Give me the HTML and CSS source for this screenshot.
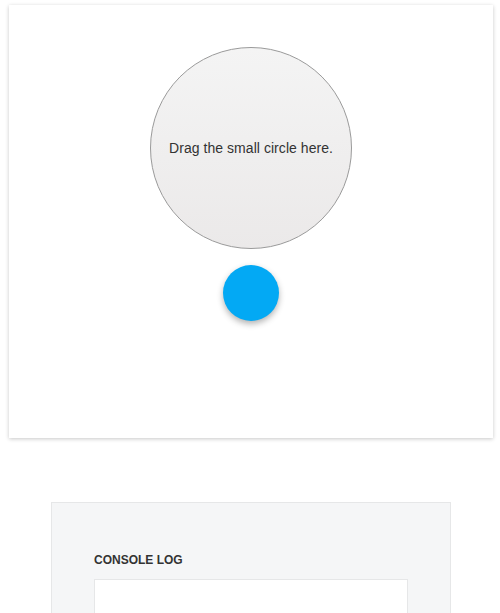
FILE: index.html
```html
<!DOCTYPE html>
<html>
<head>
<meta charset="utf-8">
<link rel="stylesheet" href="styles.css">
</head>
<body>
<div class="card">
  <div class="drop-zone"><span>Drag the small circle here.</span></div>
  <div class="dot"></div>
</div>
<div class="console">
  <div class="console-title">CONSOLE LOG</div>
  <div class="console-box"></div>
</div>
</body>
</html>
```
FILE: styles.css
```css
html, body {
  margin: 0;
  padding: 0;
  background: #fff;
  font-family: "Liberation Sans", Arial, sans-serif;
  overflow: hidden;
}
body {
  padding: 5px 7px 0 9px;
  height: 613px;
  box-sizing: border-box;
}
.card {
  height: 433px;
  background: #fff;
  box-shadow: 0 1px 4px rgba(0, 0, 0, 0.22);
  display: flex;
  flex-direction: column;
  align-items: center;
  padding-top: 42px;
  box-sizing: border-box;
}
.drop-zone {
  width: 200px;
  height: 200px;
  border: 1px solid #9a9a9a;
  border-radius: 50%;
  background: linear-gradient(#f4f4f4, #ebe9e9);
  display: flex;
  align-items: center;
  justify-content: center;
  font-size: 14px;
  letter-spacing: 0.05px;
  color: #333;
}
.dot {
  margin-top: 16px;
  width: 56px;
  height: 56px;
  border-radius: 50%;
  background: #03a9f4;
  box-shadow: 0 3px 6px rgba(0, 0, 0, 0.3);
}
.console {
  margin: 64px 0 0 42px;
  width: 400px;
  box-sizing: border-box;
  background: #f5f6f7;
  border: 1px solid #e6e7e8;
  border-bottom: 0;
  padding: 49px 42px 0;
  height: 111px;
  overflow: hidden;
}
.console-title {
  font-size: 12px;
  line-height: 16px;
  font-weight: bold;
  letter-spacing: 0;
  color: #333;
  margin-bottom: 11px;
}
.console-box {
  background: #fff;
  border: 1px solid #e6e7e8;
  border-bottom: 0;
  height: 40px;
}
```
